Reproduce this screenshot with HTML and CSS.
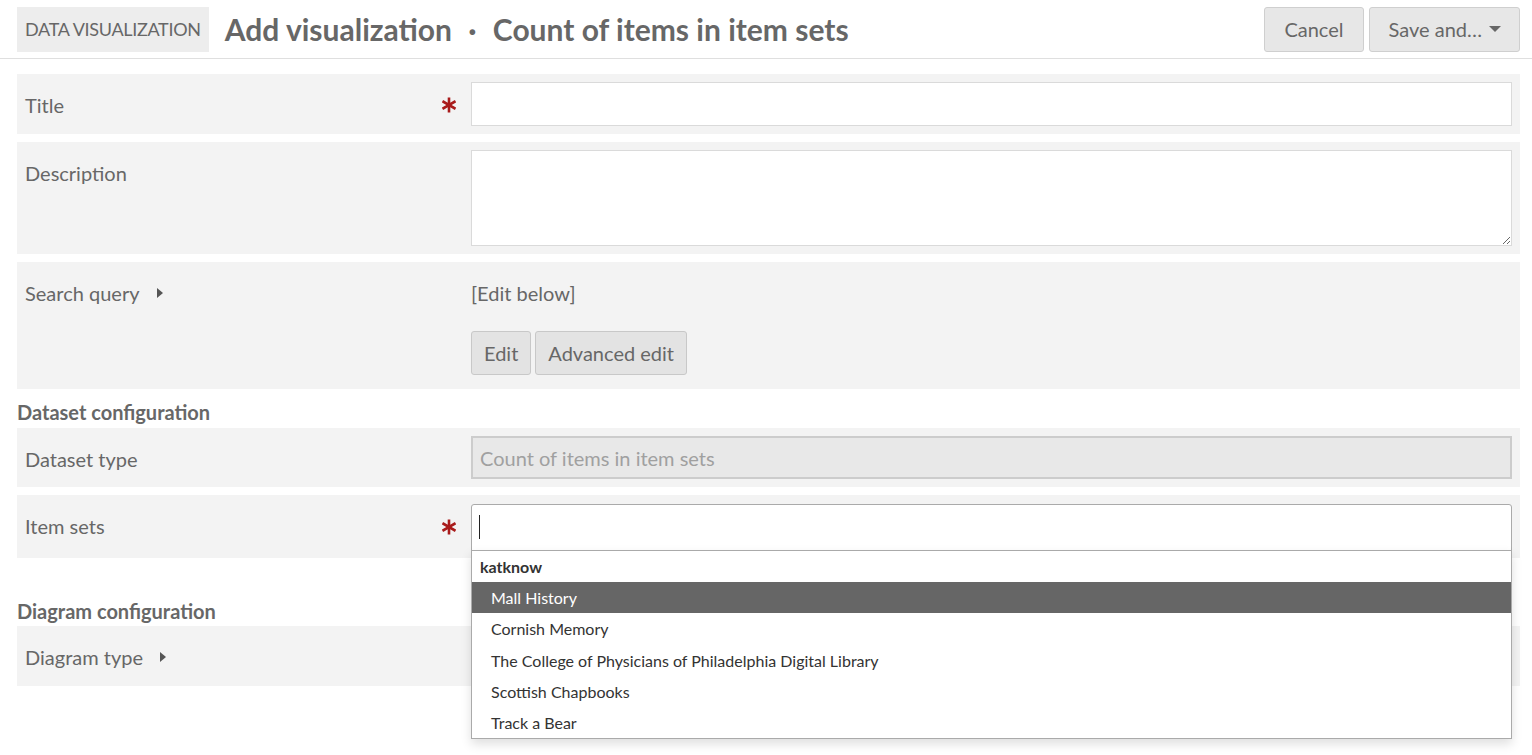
FILE: index.html
```html
<!DOCTYPE html>
<html lang="en">
<head>
<meta charset="utf-8">
<title>Add visualization</title>
<link rel="stylesheet" href="styles.css">
</head>
<body>
<header class="page-header">
  <div class="section-tag">Data visualization</div>
  <h1 class="page-title">Add visualization <span class="dot">·</span> Count of items in item sets</h1>
  <div class="page-actions">
    <button class="btn">Cancel</button>
    <button class="btn">Save and… <span class="down"></span></button>
  </div>
</header>

<main class="form">
  <div class="field">
    <div class="field-label"><span>Title</span>
      <svg class="req" width="14" height="16" viewBox="0 0 14 16"><g stroke="#a91b1b" stroke-width="2.6" stroke-linecap="butt"><line x1="7" y1="0.5" x2="7" y2="15.5"/><line x1="0.5" y1="4.2" x2="13.5" y2="11.8"/><line x1="0.5" y1="11.8" x2="13.5" y2="4.2"/></g></svg>
    </div>
    <div class="field-input"><input class="text" type="text"></div>
  </div>

  <div class="field">
    <div class="field-label"><span>Description</span></div>
    <div class="field-input"><textarea class="textarea"></textarea></div>
  </div>

  <div class="field field-tall">
    <div class="field-label"><span>Search query</span><span class="caret"></span></div>
    <div class="field-input">
      <div class="query-text">[Edit below]</div>
      <div class="btn-group">
        <button class="btn btn-small">Edit</button>
        <button class="btn btn-small">Advanced edit</button>
      </div>
    </div>
  </div>

  <h2 class="section-heading">Dataset configuration</h2>

  <div class="field field-disabled">
    <div class="field-label"><span>Dataset type</span></div>
    <div class="field-input"><input class="text disabled" type="text" value="Count of items in item sets" disabled></div>
  </div>

  <div class="field field-select">
    <div class="field-label"><span>Item sets</span>
      <svg class="req" width="14" height="16" viewBox="0 0 14 16"><g stroke="#a91b1b" stroke-width="2.6" stroke-linecap="butt"><line x1="7" y1="0.5" x2="7" y2="15.5"/><line x1="0.5" y1="4.2" x2="13.5" y2="11.8"/><line x1="0.5" y1="11.8" x2="13.5" y2="4.2"/></g></svg>
    </div>
    <div class="field-input">
      <div class="select-box"><span class="cursor"></span></div>
      <ul class="dropdown">
        <li class="group">katknow</li>
        <li class="option active">Mall History</li>
        <li class="option">Cornish Memory</li>
        <li class="option">The College of Physicians of Philadelphia Digital Library</li>
        <li class="option">Scottish Chapbooks</li>
        <li class="option">Track a Bear</li>
      </ul>
    </div>
  </div>

  <h2 class="section-heading section-heading-2">Diagram configuration</h2>

  <div class="field">
    <div class="field-label"><span>Diagram type</span><span class="caret"></span></div>
    <div class="field-input"></div>
  </div>
</main>
</body>
</html>
```

FILE: styles.css
```css
* { box-sizing: border-box; }

html, body {
  min-height: 755px;
}

body {
  margin: 0;
  font-family: Lato, "Open Sans", "Liberation Sans", sans-serif;
  color: #676767;
  background: #fff;
}

.page-header {
  display: flex;
  align-items: center;
  height: 59px;
  padding: 0 12px 0 17px;
  border-bottom: 1px solid #dfdfdf;
}

.section-tag {
  background: #ededed;
  text-transform: uppercase;
  font-size: 18px;
  line-height: 45px;
  height: 45px;
  padding: 0 8px;
  letter-spacing: -0.3px;
}

.page-title {
  margin: 0 0 0 16px;
  font-size: 30px;
  font-weight: 700;
  color: #676767;
  flex: 1;
}

.page-title .dot {
  margin: 0 9px;
}

.page-actions {
  display: flex;
  gap: 5px;
}

.btn {
  font-family: inherit;
  font-size: 20px;
  color: #676767;
  background: #e7e7e7;
  border: 1px solid #cfcfcf;
  border-radius: 3px;
  height: 45px;
  padding: 0 19px;
  display: inline-flex;
  align-items: center;
}

.down {
  display: inline-block;
  margin-left: 7px;
  border-left: 6px solid transparent;
  border-right: 6px solid transparent;
  border-top: 6px solid #676767;
}

.page-actions .btn:last-child {
  padding-right: 18px;
}

.form {
  padding: 15px 12px 60px 17px;
}

.field {
  display: flex;
  background: #f3f3f3;
  padding: 8px;
  margin-bottom: 8px;
}

.field-label {
  width: 446px;
  flex: none;
  font-size: 20px;
  line-height: 24px;
  display: flex;
  align-items: flex-start;
  padding-top: 11px;
  position: relative;
}

.field-label .req {
  position: absolute;
  right: 15px;
  top: 15px;
}

.caret {
  display: inline-block;
  margin: 7px 0 0 17px;
  border-top: 5px solid transparent;
  border-bottom: 5px solid transparent;
  border-left: 6px solid #555;
}

.field-input {
  flex: 1;
  position: relative;
  min-height: 44px;
}

.text {
  display: block;
  width: 100%;
  height: 44px;
  border: 1px solid #dadada;
  background: #fff;
  font-family: inherit;
  font-size: 20px;
  padding: 0 8px;
}

.field-disabled .field-input {
  min-height: 43px;
}

.text.disabled {
  height: 43px;
  background: #e8e8e8;
  border: 2px solid #cccccc;
  color: #a0a0a0;
  padding: 0 7px;
}

.textarea {
  display: block;
  width: 100%;
  height: 96px;
  border: 1px solid #dadada;
  background: #fff;
  font-family: inherit;
  font-size: 20px;
}

.field-tall {
  padding-top: 19px;
  padding-bottom: 14px;
}

.field-tall .field-label {
  padding-top: 0;
}

.field-tall .caret {
  margin-top: 7px;
}

.query-text {
  font-size: 20px;
  line-height: 24px;
}

.btn-group {
  display: flex;
  gap: 4px;
  margin-top: 26px;
}

.btn-small {
  height: 44px;
  padding: 0 12px;
  background: #e3e3e3;
  border-color: #c8c8c8;
}

.section-heading {
  margin: 11px 0 4px;
  font-size: 20px;
  font-weight: 700;
  color: #676767;
  line-height: 24px;
}

.section-heading-2 {
  margin-top: 41px;
  margin-bottom: 3px;
}

.field-select {
  padding-top: 9px;
  padding-bottom: 7px;
}

.field-select .field-label {
  padding-top: 10px;
}

.field-select .req {
  top: 15px;
}

.select-box {
  height: 47px;
  border: 1px solid #aaaaaa;
  border-radius: 3px 3px 0 0;
  background: #fff;
  position: relative;
}

.cursor {
  position: absolute;
  left: 7px;
  top: 10px;
  width: 1px;
  height: 24px;
  background: #222;
}

.dropdown {
  position: absolute;
  left: 0;
  right: 0;
  top: 46px;
  margin: 0;
  padding: 0;
  list-style: none;
  background: #fff;
  border: 1px solid #aaaaaa;
  box-shadow: 0 5px 10px rgba(0,0,0,0.13);
  z-index: 10;
  font-size: 16px;
  color: #333;
}

.dropdown .group {
  font-weight: 700;
  padding: 6px 8px 0;
  height: 31px;
  line-height: 20px;
}

.dropdown .option {
  height: 31.25px;
  line-height: 31px;
  padding: 0 19px;
}

.dropdown .option.active {
  background: #666666;
  color: #fff;
}
```
